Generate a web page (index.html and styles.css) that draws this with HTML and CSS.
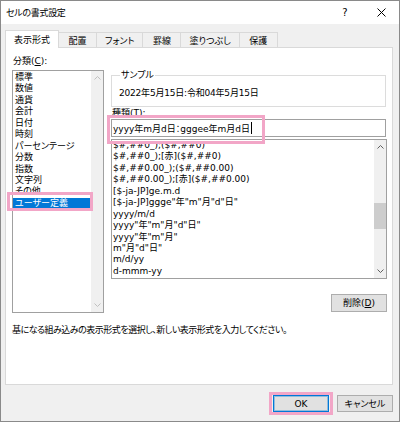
FILE: index.html
```html
<!DOCTYPE html>
<html lang="ja">
<head>
<meta charset="utf-8">
<title>セルの書式設定</title>
<link rel="stylesheet" href="styles.css">
</head>
<body>
<div class="window">
  <div class="titlebar">
    <span class="title">セルの書式設定</span>
    <span class="tbtn help">?</span>
    <span class="tbtn close"><svg width="9" height="9" viewBox="0 0 9 9"><path d="M0.5 0.5L8.5 8.5M8.5 0.5L0.5 8.5"/></svg></span>
  </div>
  <div class="tabs">
    <div class="tab active">表示形式</div>
    <div class="tab">配置</div>
    <div class="tab">フォント</div>
    <div class="tab">罫線</div>
    <div class="tab">塗りつぶし</div>
    <div class="tab">保護</div>
  </div>
  <div class="panel">
    <div class="columns">
      <div class="left">
        <div class="label">分類(<u>C</u>):</div>
        <div class="listbox cat">
          <ul class="items">
            <li>標準</li>
            <li>数値</li>
            <li>通貨</li>
            <li>会計</li>
            <li>日付</li>
            <li>時刻</li>
            <li>パーセンテージ</li>
            <li>分数</li>
            <li>指数</li>
            <li>文字列</li>
            <li>その他</li>
            <li class="selected">ユーザー定義</li>
          </ul>
          <div class="scrollbar disabled">
            <div class="arrow"><svg width="7" height="4" viewBox="0 0 7 4"><polyline points="0.5,3.5 3.5,0.5 6.5,3.5"/></svg></div>
            <div class="arrow down"><svg width="7" height="4" viewBox="0 0 7 4"><polyline points="0.5,0.5 3.5,3.5 6.5,0.5"/></svg></div>
          </div>
        </div>
      </div>
      <div class="right">
        <fieldset class="sample">
          <legend>サンプル</legend>
          <div class="sample-text">2022年5月15日:令和04年5月15日</div>
        </fieldset>
        <div class="label">種類(<u>T</u>):</div>
        <div class="input">yyyy年m月d日：gggee年m月d日<span class="caret"></span></div>
        <div class="listbox fmt">
          <ul class="items">
            <li>$#,##0_);($#,##0)</li>
            <li>$#,##0_);[赤]($#,##0)</li>
            <li>$#,##0.00_);($#,##0.00)</li>
            <li>$#,##0.00_);[赤]($#,##0.00)</li>
            <li>[$-ja-JP]ge.m.d</li>
            <li>[$-ja-JP]ggge"年"m"月"d"日"</li>
            <li>yyyy/m/d</li>
            <li>yyyy"年"m"月"d"日"</li>
            <li>yyyy"年"m"月"</li>
            <li>m"月"d"日"</li>
            <li>m/d/yy</li>
            <li>d-mmm-yy</li>
          </ul>
          <div class="scrollbar">
            <div class="arrow"><svg width="7" height="4" viewBox="0 0 7 4"><polyline points="0.5,3.5 3.5,0.5 6.5,3.5"/></svg></div>
            <div class="thumb"></div>
            <div class="arrow down"><svg width="7" height="4" viewBox="0 0 7 4"><polyline points="0.5,0.5 3.5,3.5 6.5,0.5"/></svg></div>
          </div>
        </div>
        <div class="actions"><button class="btn del">削除(<u>D</u>)</button></div>
      </div>
    </div>
    <p class="desc">基になる組み込みの表示形式を選択し、新しい表示形式を入力してください。</p>
  </div>
  <div class="footer">
    <button class="btn ok">OK</button>
    <button class="btn">キャンセル</button>
  </div>

  <div class="mark mark-cat"></div>
  <div class="mark mark-type"></div>
  <div class="mark mark-ok"></div>
</div>
</body>
</html>
```

FILE: styles.css
```css
* { box-sizing: border-box; }
html, body { margin: 0; padding: 0; }
body {
  width: 400px;
  height: 422px;
  overflow: hidden;
  background: #fff;
  font-family: "DejaVu Sans", "Noto Sans CJK JP", sans-serif;
  font-size: 9px;
  color: #000;
  font-feature-settings: "palt";
}

.window {
  position: relative;
  width: 400px;
  height: 422px;
  border: 1px solid #8a8a8a;
  background: #f0f0f0;
  display: flex;
  flex-direction: column;
}

/* title bar */
.titlebar {
  height: 23px;
  flex: 0 0 23px;
  background: #fff;
  display: flex;
  align-items: center;
  padding-left: 5px;
}
.title { flex: 1; line-height: 12px; letter-spacing: -0.3px; }
.tbtn {
  width: 36px;
  height: 23px;
  display: flex;
  align-items: center;
  justify-content: center;
  font-size: 10px;
}
.close svg path { stroke: #000; stroke-width: 1; fill: none; }

/* tabs */
.tabs {
  display: flex;
  align-items: flex-end;
  height: 23px;
  flex: 0 0 23px;
  padding: 0 0 0 4px;
}
.tab {
  height: 15px;
  min-width: 39px;
  padding: 1px 8px 0;
  display: flex;
  align-items: center;
  justify-content: center;
  line-height: 12px;
  white-space: nowrap;
  border: 1px solid #d9d9d9;
  border-bottom: none;
  margin-left: -1px;
  background: #f0f0f0;
}
.tab:first-child { margin-left: 0; }
.tab.active {
  position: relative;
  z-index: 1;
  height: 18px;
  margin-bottom: -1px;
  background: #fff;
}

/* panel */
.panel {
  height: 338px;
  flex: 0 0 338px;
  margin: 0 6px 0 4px;
  border: 1px solid #d9d9d9;
  background: #fff;
  padding: 7px 5px 0 6px;
}
.columns { display: flex; gap: 7px; align-items: flex-start; }
.left { width: 92px; flex: 0 0 92px; }
.right { flex: 1; min-width: 0; }

.label { line-height: 12px; padding-left: 1px; white-space: nowrap; }
.left .label { margin-bottom: 3px; }

.listbox {
  display: flex;
  border: 1px solid #a0a0a0;
  background: #fff;
  overflow: hidden;
}
.listbox.cat { height: 243px; }
.listbox.fmt { height: 140px; margin-top: 2px; }

.items {
  list-style: none;
  margin: 0;
  padding: 0;
  flex: 1;
  min-width: 0;
  overflow: hidden;
}
.items li {
  height: 11.45px;
  line-height: 11.45px;
  white-space: nowrap;
}
.cat .items { padding-top: 1px; }
.cat .items li { padding-left: 2px; }
.fmt .items li { padding-left: 1px; }
.items li.selected { background: #0078d7; color: #fff; }

.scrollbar {
  width: 12px;
  flex: 0 0 12px;
  background: #f0f0f0;
  display: flex;
  flex-direction: column;
}
.arrow {
  height: 14px;
  flex: 0 0 14px;
  display: flex;
  align-items: center;
  justify-content: center;
}
.arrow.down { margin-top: auto; }
.arrow polyline { fill: none; stroke: #606060; stroke-width: 1; }
.scrollbar.disabled .arrow polyline { stroke: #c0c0c0; }
.thumb { height: 26px; margin-top: 49px; background: #cdcdcd; }

/* sample group */
.sample {
  margin: 14px 1px 0 0;
  padding: 6px 7px 7px;
  border: 1px solid #dcdcdc;
  min-width: 0;
}
.sample legend {
  padding: 0 1px;
  margin-left: 1px;
  line-height: 12px;
}
.sample-text { line-height: 12px; white-space: nowrap; letter-spacing: -0.2px; }

/* input */
.input {
  height: 18px;
  margin-right: 1px;
  border: 1px solid #a0a0a0;
  padding: 2px 1px 0;
  line-height: 14px;
  white-space: nowrap;
  background: #fff;
}
.caret {
  display: inline-block;
  width: 1px;
  height: 12px;
  background: #000;
  vertical-align: -2px;
  margin-left: 1px;
}

.actions { display: flex; justify-content: flex-end; margin-top: 15px; }

.btn {
  font-family: inherit;
  font-size: 9px;
  font-weight: normal;
  font-feature-settings: "palt";
  color: #000;
  background: #e1e1e1;
  border: 1px solid #adadad;
  padding: 0;
  margin: 0;
  line-height: 12px;
}
.btn.del { width: 56px; height: 18px; }

.desc {
  margin: 11px 0 0;
  line-height: 12px;
  white-space: nowrap;
  letter-spacing: -0.5px;
}

/* footer */
.footer {
  display: flex;
  justify-content: flex-end;
  gap: 8px;
  padding: 10px 6px 0 0;
}
.footer .btn { width: 56px; height: 17px; }
.btn.ok {
  border-color: #0078d7;
  box-shadow: inset 0 0 0 1px rgba(0, 120, 215, 0.35);
}

/* pink annotation frames */
.mark {
  position: absolute;
  border: 3px solid #f2a6c7;
  pointer-events: none;
}
.mark-cat { left: 6px; top: 191px; width: 86px; height: 19px; }
.mark-type { left: 106px; top: 114px; width: 158px; height: 29px; }
.mark-ok { left: 268px; top: 391px; width: 64px; height: 23px; }
```
